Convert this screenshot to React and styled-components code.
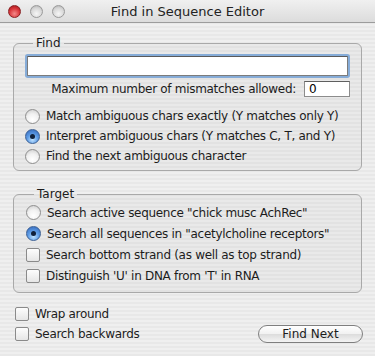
import React from 'react'
import styled, { createGlobalStyle } from 'styled-components'

const GlobalStyle = createGlobalStyle`
  html, body {
    margin: 0;
    padding: 0;
    overflow: hidden;
  }
  body {
    font-family: "DejaVu Sans", "Liberation Sans", sans-serif;
    color: #1c1c1c;
  }
`

const App = () => {
  return (
    <Window>
      <GlobalStyle />
      <TitleBar>
        <Lights>
          <Light $color="red" />
          <Light />
          <Light />
        </Lights>
        <Title>Find in Sequence Editor</Title>
      </TitleBar>

      <Content>
        <Group $find>
          <Legend>Find</Legend>
          <SearchField />
          <MismatchRow>
            <span>Maximum number of mismatches allowed:</span>
            <SmallField defaultValue="0" />
          </MismatchRow>
          <Options $rowHeight={20} $top={9}>
            <Option>
              <Radio />
              Match ambiguous chars exactly (Y matches only Y)
            </Option>
            <Option>
              <Radio $checked />
              Interpret ambiguous chars (Y matches C, T, and Y)
            </Option>
            <Option>
              <Radio />
              Find the next ambiguous character
            </Option>
          </Options>
        </Group>

        <Group>
          <Legend>Target</Legend>
          <Options $rowHeight={21} $top={0}>
            <Option>
              <Radio />
              Search active sequence "chick musc AchRec"
            </Option>
            <Option>
              <Radio $checked />
              Search all sequences in "acetylcholine receptors"
            </Option>
            <Option>
              <Checkbox />
              Search bottom strand (as well as top strand)
            </Option>
            <Option>
              <Checkbox />
              Distinguish 'U' in DNA from 'T' in RNA
            </Option>
          </Options>
        </Group>

        <Footer>
          <Option>
            <Checkbox />
            Wrap around
          </Option>
          <FooterRow>
            <Option>
              <Checkbox />
              Search backwards
            </Option>
            <Button>Find Next</Button>
          </FooterRow>
        </Footer>
      </Content>
    </Window>
  )
}

export default App

const Window = styled.div`
  width: 375px;
  height: 356px;
  background: repeating-linear-gradient(
    to bottom,
    #efefef 0px,
    #efefef 2px,
    #e8e8e8 2px,
    #e8e8e8 4px
  );
  font-size: 12px;
  letter-spacing: -0.3px;
`

const TitleBar = styled.div`
  height: 22px;
  display: flex;
  align-items: center;
  position: relative;
  border-bottom: 1px solid #9c9c9c;
  background: linear-gradient(to bottom, #f0f0f0, #dcdcdc);
`

const Lights = styled.div`
  display: flex;
  gap: 9px;
  padding-left: 8px;
`

const Light = styled.div`
  width: 13px;
  height: 13px;
  border-radius: 50%;
  background: ${p => p.$color === 'red'
    ? 'radial-gradient(circle at 50% 70%, #f48a8a 0%, #d9363a 55%, #9a1418 100%)'
    : 'radial-gradient(circle at 50% 70%, #f6f6f6 0%, #d6d6d6 60%, #a8a8a8 100%)'};
  border: 1px solid ${p => p.$color === 'red' ? '#8a2022' : '#9a9a9a'};
  box-sizing: border-box;
`

const Title = styled.div`
  position: absolute;
  left: 0;
  right: 0;
  text-align: center;
  font-size: 13px;
  letter-spacing: 0;
  color: #222;
  pointer-events: none;
`

const Content = styled.div`
  padding: 13px 13px 0 13px;
  display: flex;
  flex-direction: column;
  gap: 16px;
`

const Group = styled.fieldset`
  margin: 0;
  padding: ${p => p.$find ? '4px 11px 4px 11px' : '1px 11px 6px 12px'};
  border: 1px solid #a9a9a9;
  border-radius: 6px;
  background: rgba(0, 0, 0, 0.025);
  min-width: 0;
`

const Legend = styled.legend`
  margin-left: 8px;
  padding: 0 3px;
  font-size: 12px;
  line-height: 14px;
  letter-spacing: 0;
`

const SearchField = styled.input`
  display: block;
  box-sizing: border-box;
  width: calc(100% - 4px);
  margin: 2px;
  height: 20px;
  border: 1px solid #7b7b7b;
  border-top-color: #5a5a5a;
  box-shadow: 0 0 0 2px #86acd8;
  border-radius: 1px;
  background: #fff;
  outline: none;
`

const MismatchRow = styled.div`
  display: flex;
  justify-content: flex-end;
  align-items: center;
  gap: 8px;
  margin-top: 5px;
  height: 16px;
`

const SmallField = styled.input`
  box-sizing: border-box;
  width: 46px;
  height: 16px;
  border: 1px solid #8c8c8c;
  border-top-color: #5f5f5f;
  background: #fff;
  font-family: inherit;
  font-size: 12px;
  padding: 0 4px;
  outline: none;
`

const Options = styled.div`
  display: flex;
  flex-direction: column;
  margin-top: ${p => p.$top}px;

  && > * {
    height: ${p => p.$rowHeight}px;
  }
`

const Option = styled.label`
  display: flex;
  align-items: center;
  gap: 6px;
  white-space: nowrap;
`

const Radio = styled.span`
  flex: none;
  width: 15px;
  height: 15px;
  border-radius: 50%;
  box-sizing: border-box;
  position: relative;
  border: 1px solid ${p => p.$checked ? '#3a5f94' : '#8e8e8e'};
  background: ${p => p.$checked
    ? 'radial-gradient(circle at 50% 75%, #bfe2ff 0%, #5f9de6 45%, #2e63b8 100%)'
    : 'radial-gradient(circle at 50% 75%, #ffffff 0%, #f1f1f1 50%, #c9c9c9 100%)'};

  &::after {
    content: '';
    display: ${p => p.$checked ? 'block' : 'none'};
    position: absolute;
    left: 4px;
    top: 4px;
    width: 5px;
    height: 5px;
    border-radius: 50%;
    background: #10203a;
  }
`

const Checkbox = styled.span`
  flex: none;
  width: 14px;
  height: 14px;
  box-sizing: border-box;
  border: 1px solid #8a8a8a;
  border-radius: 2px;
  background: linear-gradient(to bottom, #fdfdfd, #e6e6e6);
`

const Footer = styled.div`
  display: flex;
  flex-direction: column;
  margin-top: -5px;
  padding-left: 2px;

  & > * {
    height: 20px;
  }
`

const FooterRow = styled.div`
  display: flex;
  justify-content: space-between;
  align-items: center;
`

const Button = styled.button`
  width: 105px;
  height: 18px;
  border-radius: 9px;
  border: 1px solid #7f7f7f;
  background: linear-gradient(to bottom, #ffffff 0%, #f1f1f1 50%, #dcdcdc 51%, #f4f4f4 100%);
  font-family: inherit;
  font-size: 12px;
  letter-spacing: 0;
  color: #1c1c1c;
  padding: 0;
  margin-right: -1px;
`
